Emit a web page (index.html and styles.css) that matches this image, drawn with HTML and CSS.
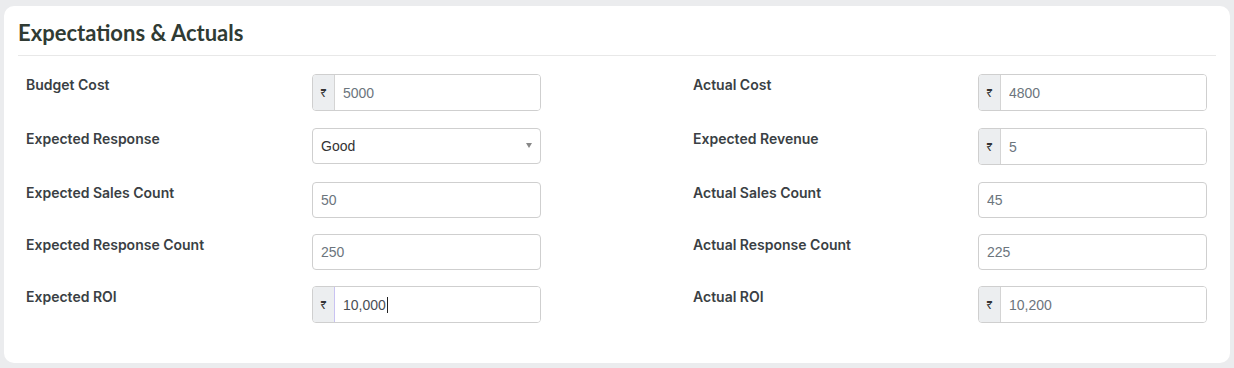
FILE: index.html
```html
<!DOCTYPE html>
<html lang="en">
<head>
    <meta charset="UTF-8">
    <meta name="viewport" content="width=device-width, initial-scale=1.0">
    <title>Expectations &amp; Actuals</title>
    <link rel="stylesheet" href="styles.css">
</head>
<body>
    <div class="card">
        <h2 class="card-title">Expectations &amp; Actuals</h2>
        <form class="form-grid">
            <div class="col">
                <div class="row">
                    <label for="budget_cost">Budget Cost</label>
                    <div class="input-group">
                        <span class="prefix">₹</span>
                        <input type="text" id="budget_cost" value="5000">
                    </div>
                </div>
                <div class="row">
                    <label for="expected_response">Expected Response</label>
                    <div class="select-wrap">
                        <select id="expected_response">
                            <option>Good</option>
                            <option>Average</option>
                            <option>Poor</option>
                        </select>
                    </div>
                </div>
                <div class="row">
                    <label for="expected_sales">Expected Sales Count</label>
                    <input type="text" id="expected_sales" class="plain" value="50">
                </div>
                <div class="row">
                    <label for="expected_resp_count">Expected Response Count</label>
                    <input type="text" id="expected_resp_count" class="plain" value="250">
                </div>
                <div class="row">
                    <label for="expected_roi">Expected ROI</label>
                    <div class="input-group active">
                        <span class="prefix">₹</span>
                        <input type="text" id="expected_roi" value="10,000">
                        <span class="caret"></span>
                    </div>
                </div>
            </div>
            <div class="col right">
                <div class="row">
                    <label for="actual_cost">Actual Cost</label>
                    <div class="input-group">
                        <span class="prefix">₹</span>
                        <input type="text" id="actual_cost" value="4800">
                    </div>
                </div>
                <div class="row">
                    <label for="expected_revenue">Expected Revenue</label>
                    <div class="input-group">
                        <span class="prefix">₹</span>
                        <input type="text" id="expected_revenue" value="5">
                    </div>
                </div>
                <div class="row">
                    <label for="actual_sales">Actual Sales Count</label>
                    <input type="text" id="actual_sales" class="plain" value="45">
                </div>
                <div class="row">
                    <label for="actual_resp_count">Actual Response Count</label>
                    <input type="text" id="actual_resp_count" class="plain" value="225">
                </div>
                <div class="row">
                    <label for="actual_roi">Actual ROI</label>
                    <div class="input-group">
                        <span class="prefix">₹</span>
                        <input type="text" id="actual_roi" value="10,200">
                    </div>
                </div>
            </div>
        </form>
    </div>
</body>
</html>
```

FILE: styles.css
```css
body {
    margin: 0;
    padding: 6px 4px 5px 4px;
    background-color: #ebecee;
    font-family: Inter, "Liberation Sans", Arial, sans-serif;
}
.card {
    background-color: #fff;
    border-radius: 10px;
    padding: 10px 14px 32px 14px;
    height: 315px;
}
.card-title {
    margin: 0;
    padding: 3px 0 9px 0;
    font-family: Lato, "Open Sans", sans-serif;
    font-size: 22px;
    font-weight: 700;
    color: #303b34;
    border-bottom: 1px solid #e8e8e8;
}
.form-grid {
    display: grid;
    grid-template-columns: 515px 515px;
    column-gap: 152px;
    padding: 18px 0 0 8px;
}
.col {
    display: flex;
    flex-direction: column;
}
.row {
    display: grid;
    grid-template-columns: 286px 229px;
    align-items: start;
    height: 54px;
}
.right .row {
    grid-template-columns: 285px 229px;
}
.row:nth-child(3),
.row:nth-child(4) {
    height: 52px;
}
.row label {
    font-family: Inter, sans-serif;
    font-size: 14px;
    font-weight: 600;
    color: #3a3f44;
    padding-top: 2px;
}
.input-group {
    position: relative;
    display: flex;
    height: 37px;
    box-sizing: border-box;
    border: 1px solid #cfcfcf;
    border-radius: 4px;
    overflow: hidden;
}
.prefix {
    width: 21px;
    background-color: #eceef0;
    border-right: 1px solid #d4d4d4;
    font-size: 11px;
    color: #333;
    display: flex;
    align-items: center;
    justify-content: center;
}
.input-group input,
input.plain {
    font-family: "Liberation Sans", Arial, sans-serif;
    font-size: 14px;
    color: #6c757d;
    border: none;
    outline: none;
    padding: 0 8px;
    min-width: 0;
    flex: 1;
}
input.plain {
    height: 36px;
    box-sizing: border-box;
    border: 1px solid #cfcfcf;
    border-radius: 4px;
}
.input-group.active .prefix {
    border-right: 1px solid #c9c3f2;
}
.input-group.active input {
    color: #4a4f55;
}
.caret {
    position: absolute;
    left: 74px;
    top: 10px;
    width: 1px;
    height: 16px;
    background-color: #222;
}
.select-wrap {
    position: relative;
}
.select-wrap select {
    width: 100%;
    height: 36px;
    appearance: none;
    -webkit-appearance: none;
    background: #fff;
    border: 1px solid #cfcfcf;
    border-radius: 4px;
    padding: 0 8px;
    font-family: "Liberation Sans", Arial, sans-serif;
    font-size: 14px;
    color: #333;
}
.select-wrap::after {
    content: "";
    position: absolute;
    right: 9px;
    top: 15px;
    border-left: 3px solid transparent;
    border-right: 3px solid transparent;
    border-top: 5px solid #888;
    pointer-events: none;
}
```
